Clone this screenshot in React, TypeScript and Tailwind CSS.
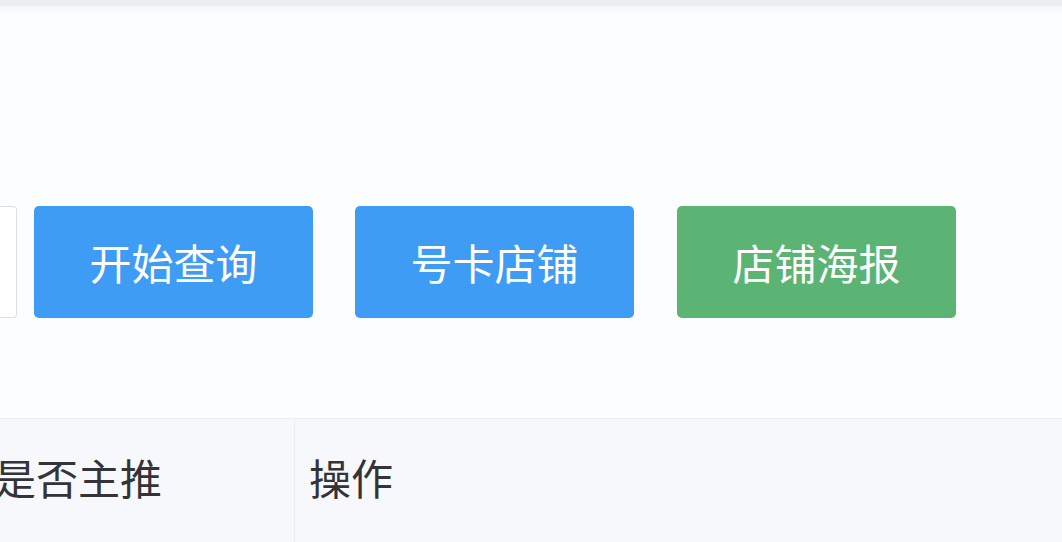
export default function App() {
  return (
    <div
      className="w-[1062px] h-[542px] overflow-hidden bg-[#fcfdff] flex flex-col"
      style={{ fontFamily: '"Noto Sans CJK SC", "Noto Sans", sans-serif' }}
    >
      {/* top strip */}
      <div className="h-[6px] bg-[#eceef1] shrink-0" />
      <div className="h-[10px] bg-gradient-to-b from-[#f4f5f7] to-[#fcfdff] shrink-0" />

      {/* search row */}
      <div className="flex items-center mt-[190px] h-[112px] shrink-0">
        <div className="w-[17px] h-[112px] bg-white border border-l-0 border-[#dcdfe6] rounded-r-[4px]" />
        <button className="ml-[17px] w-[279px] h-[112px] rounded-[5px] bg-[#3f9cf5] text-white text-[42px] leading-none">
          开始查询
        </button>
        <button className="ml-[42px] w-[279px] h-[112px] rounded-[5px] bg-[#3f9cf5] text-white text-[42px] leading-none">
          号卡店铺
        </button>
        <button className="ml-[43px] w-[279px] h-[112px] rounded-[5px] bg-[#5bb374] text-white text-[42px] leading-none">
          店铺海报
        </button>
      </div>

      {/* table header */}
      <div className="mt-[100px] flex-1 flex border-t border-[#eceef2] bg-[#f7f8fb]">
        <div className="w-[295px] border-r border-[#ebedf0] flex items-center">
          <span className="ml-[-6px] mt-[-8px] text-[42px] text-[#333338] leading-none">是否主推</span>
        </div>
        <div className="flex-1 flex items-center">
          <span className="ml-[14px] mt-[-8px] text-[42px] text-[#333338] leading-none">操作</span>
        </div>
      </div>
    </div>
  )
}
